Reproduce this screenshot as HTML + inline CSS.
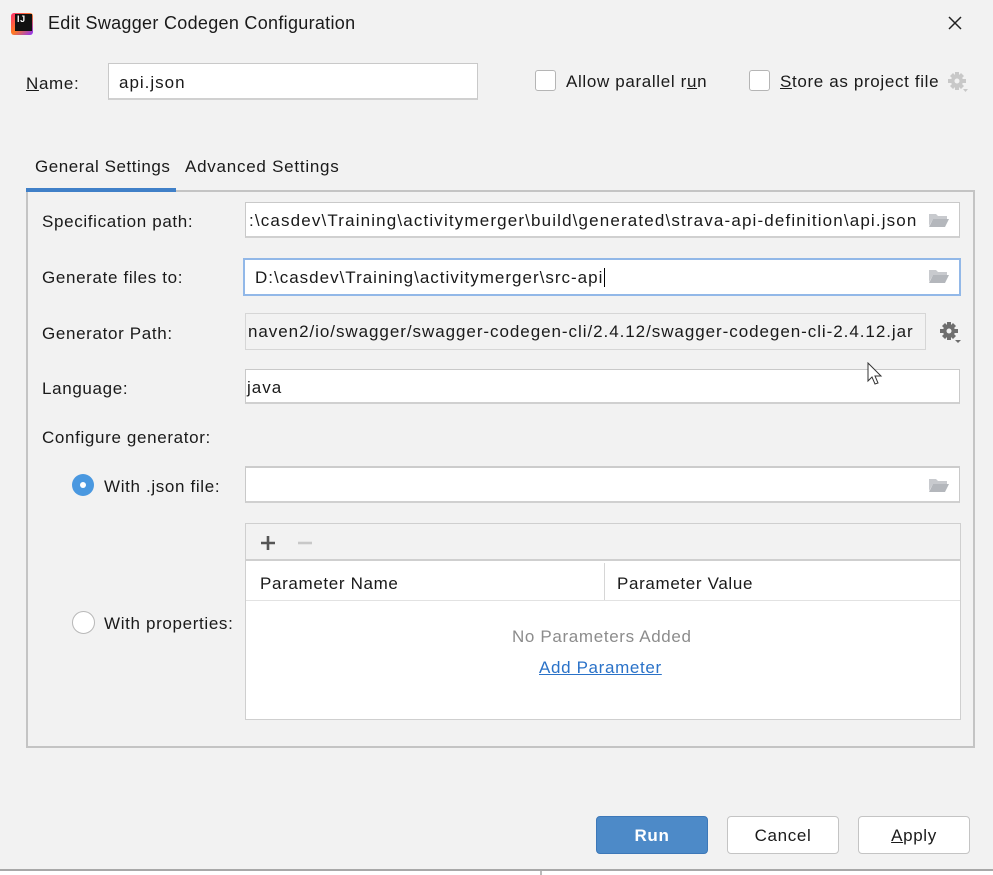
<!DOCTYPE html>
<html><head><style>
*{margin:0;padding:0;box-sizing:border-box}
body{width:993px;height:875px;background:#f2f2f2;font-family:"Liberation Sans",sans-serif;font-size:17px;letter-spacing:0.65px;color:#1a1a1a;position:relative;overflow:hidden}
.a{position:absolute;white-space:nowrap}
.f{position:absolute;background:#fff;border:1px solid #c9c9c9;border-bottom:2px solid #d0d0d0;height:36px;line-height:35px;padding-left:10px;overflow:hidden;letter-spacing:1px}
.cb{position:absolute;width:21px;height:21px;border:1px solid #b5b5b5;border-radius:3px;background:#fff}
.btn{position:absolute;height:38px;border:1px solid #c4c4c4;border-radius:4px;background:#fff;text-align:center;line-height:38px}
</style></head><body>
<div class="a" style="left:11px;top:13px;width:22px;height:22px;background:linear-gradient(135deg,#ff3070,#ff7a20 50%,#8a30ff);border-radius:3px"></div>
<div class="a" style="left:15px;top:14px;width:17px;height:17px;background:#111"></div>
<div class="a" style="left:17px;top:14px;color:#fff;font-size:9px;font-weight:bold">IJ</div>
<div class="a" style="left:48px;top:13px;font-size:18px;letter-spacing:0.3px">Edit Swagger Codegen Configuration</div>
<svg class="a" style="left:947px;top:15px" width="16" height="16"><path d="M2 2L14 14M14 2L2 14" stroke="#222" stroke-width="1.5"/></svg>

<div class="a" style="left:26px;top:74px"><u>N</u>ame:</div>
<div class="f" style="left:108px;top:63px;width:370px;height:37px;line-height:38px">api.json</div>
<div class="cb" style="left:535px;top:70px"></div>
<div class="a" style="left:566px;top:72px">Allow parallel r<u>u</u>n</div>
<div class="cb" style="left:749px;top:70px"></div>
<div class="a" style="left:780px;top:72px"><u>S</u>tore as project file</div>
<svg class="a" style="left:946px;top:70px" width="24" height="24"><g fill="#c8c8c8"><circle cx="11" cy="11" r="6"/><path d="M9 2h4v4h-4zM9 16h4v4h-4zM2 9h4v4h-4zM16 9h4v4h-4z"/><path d="M4 6l3-3 3 3-3 3zM12 6l3-3 3 3-3 3zM4 16l3-3 3 3-3 3zM12 16l3-3 3 3-3 3z"/></g><circle cx="11" cy="11" r="2.5" fill="#f2f2f2"/><path d="M17 19h5l-2.5 3z" fill="#c8c8c8"/></svg>

<div class="a" style="left:35px;top:157px;letter-spacing:0.55px">General Settings</div>
<div class="a" style="left:185px;top:157px;letter-spacing:0.75px">Advanced Settings</div>
<div class="a" style="left:26px;top:188px;width:150px;height:4px;background:#4080c8"></div>
<div class="a" style="left:176px;top:190px;width:799px;height:2px;background:#c4c4c4"></div>
<div class="a" style="left:26px;top:192px;width:949px;height:556px;border:2px solid #c4c4c4;border-top:none"></div>

<div class="a" style="left:42px;top:212px">Specification path:</div>
<div class="f" style="left:245px;top:202px;width:715px;padding-left:3px"><span style="letter-spacing:1.15px">:\casdev\Training\activitymerger\build\generated\strava-api-definition\api.json</span></div>
<div class="a" style="left:42px;top:268px">Generate files to:</div>
<div class="f" style="left:243px;top:258px;width:718px;height:38px;border:2px solid #92b8e8;line-height:36px">D:\casdev\Training\activitymerger\src-api<span style="border-left:1.5px solid #000;margin-left:1px"></span></div>
<div class="a" style="left:42px;top:324px">Generator Path:</div>
<div class="f" style="left:245px;top:313px;width:681px;height:37px;background:#f2f2f2;border:1px solid #d6d6d6;padding-left:2px;letter-spacing:0.95px">naven2/io/swagger/swagger-codegen-cli/2.4.12/swagger-codegen-cli-2.4.12.jar</div>
<svg class="a" style="left:938px;top:320px" width="26" height="26"><g fill="#6e6e6e"><circle cx="11" cy="11" r="6"/><path d="M9 2h4v4h-4zM9 16h4v4h-4zM2 9h4v4h-4zM16 9h4v4h-4z"/><path d="M4 6l3-3 3 3-3 3zM12 6l3-3 3 3-3 3zM4 16l3-3 3 3-3 3zM12 16l3-3 3 3-3 3z"/></g><circle cx="11" cy="11" r="2.5" fill="#f2f2f2"/><path d="M17 20h6l-3 3z" fill="#6e6e6e"/></svg>
<div class="a" style="left:42px;top:379px">Language:</div>
<div class="f" style="left:245px;top:369px;width:715px;height:35px;padding-left:1px">java</div>
<svg class="a" style="left:867px;top:362px" width="18" height="24"><path d="M1 1v18l4-4 3 7 3-1-3-7h6z" fill="#fff" stroke="#333"/></svg>
<div class="a" style="left:42px;top:428px">Configure generator:</div>

<div class="a" style="left:72px;top:474px;width:22px;height:22px;border-radius:50%;background:#4a98e0"></div>
<div class="a" style="left:80px;top:482px;width:6px;height:6px;border-radius:50%;background:#fff"></div>
<div class="a" style="left:104px;top:477px">With .json file:</div>
<div class="f" style="left:245px;top:466px;width:715px;height:37px;border-top:2px solid #ccc"></div>

<div class="a" style="left:72px;top:611px;width:23px;height:23px;border-radius:50%;background:#fff;border:1px solid #b8b8b8"></div>
<div class="a" style="left:104px;top:614px">With properties:</div>

<div class="a" style="left:245px;top:523px;width:716px;height:197px;border:1px solid #cfcfcf;background:#fff"></div>
<div class="a" style="left:246px;top:524px;width:714px;height:37px;background:#f2f2f2;border-bottom:2px solid #cfcfcf"></div>
<svg class="a" style="left:258px;top:534px" width="60" height="18"><path d="M10 2v14M3 9h14" stroke="#555" stroke-width="2.6"/><path d="M40 9h14" stroke="#c8c8c8" stroke-width="2.6"/></svg>
<div class="a" style="left:246px;top:600px;width:714px;height:1px;background:#e2e2e2"></div>
<div class="a" style="left:604px;top:563px;width:1px;height:37px;background:#d6d6d6"></div>
<div class="a" style="left:260px;top:574px">Parameter Name</div>
<div class="a" style="left:617px;top:574px">Parameter Value</div>
<div class="a" style="left:512px;top:627px;color:#8c8c8c">No Parameters Added</div>
<div class="a" style="left:539px;top:658px;color:#2a72c8;text-decoration:underline">Add Parameter</div>

<div class="btn" style="left:596px;top:816px;width:112px;background:#4d8ac8;border-color:#3d78b8;color:#fff;font-weight:bold">Run</div>
<div class="btn" style="left:727px;top:816px;width:112px">Cancel</div>
<div class="btn" style="left:858px;top:816px;width:112px"><u>A</u>pply</div>

<div class="a" style="left:0;top:869px;width:993px;height:2px;background:#a8a8a8"></div>
<div class="a" style="left:0;top:871px;width:993px;height:4px;background:#fff"></div>
<div class="a" style="left:540px;top:871px;width:2px;height:4px;background:#bbb"></div>
<svg class="a" style="left:928px;top:212px" width="22" height="16"><path d="M1 2h7l2 2h9v3H5L1 14z" fill="#c8cace"/><path d="M5 7h16l-4 8H1z" fill="#b4b7bc"/></svg>
<svg class="a" style="left:928px;top:268px" width="22" height="16"><path d="M1 2h7l2 2h9v3H5L1 14z" fill="#c8cace"/><path d="M5 7h16l-4 8H1z" fill="#b4b7bc"/></svg>
<svg class="a" style="left:928px;top:477px" width="22" height="16"><path d="M1 2h7l2 2h9v3H5L1 14z" fill="#c8cace"/><path d="M5 7h16l-4 8H1z" fill="#b4b7bc"/></svg>
</body></html>
